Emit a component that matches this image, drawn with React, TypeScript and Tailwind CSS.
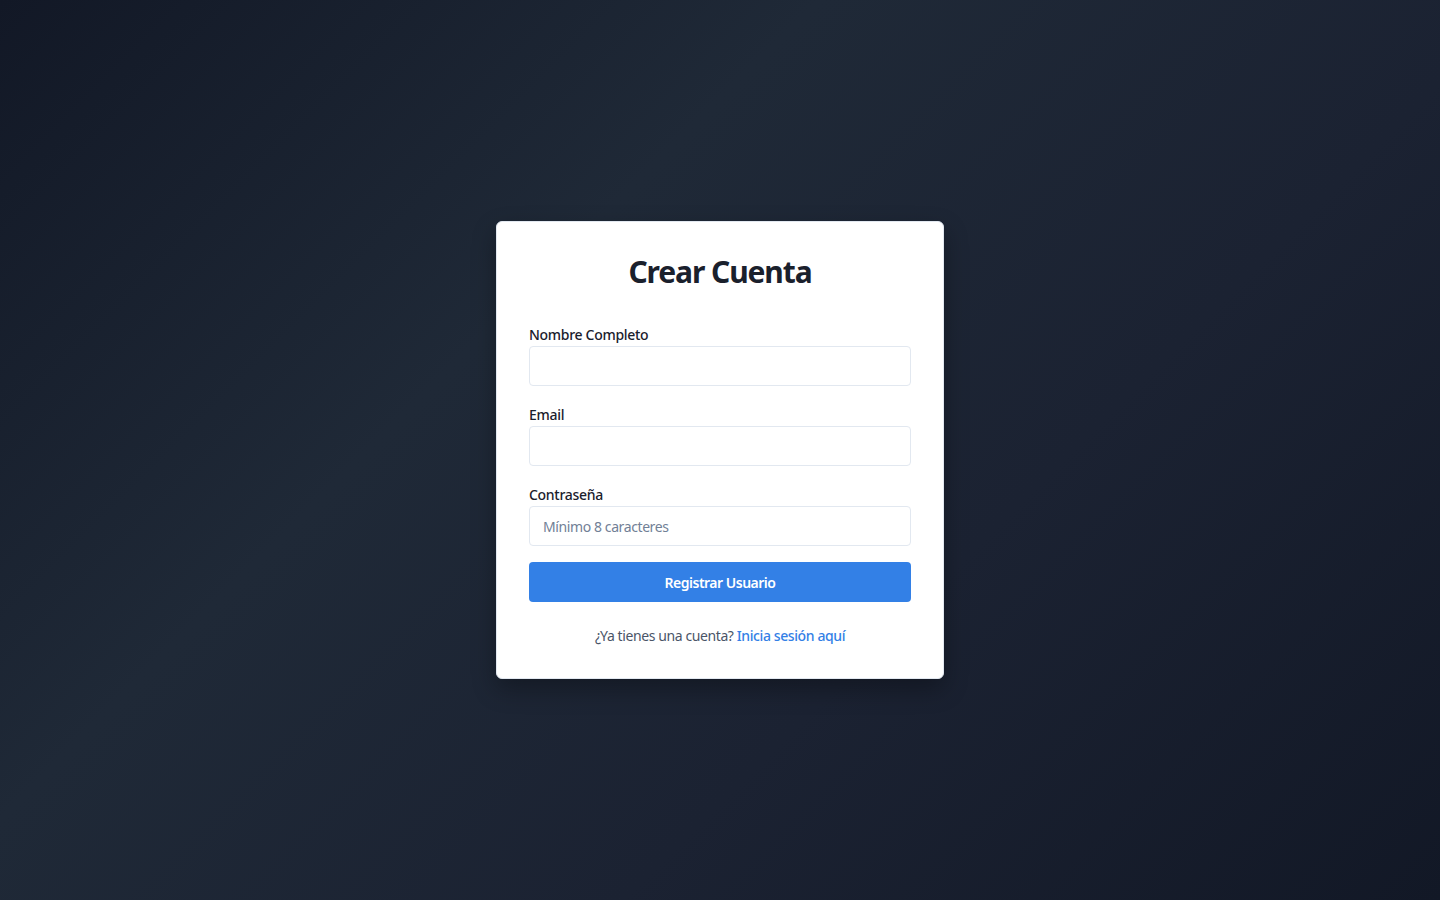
import { useState } from 'react'

// Registration card, centred on a dark diagonal gradient
export default function App() {
  const [name, setName] = useState('')
  const [email, setEmail] = useState('')
  const [password, setPassword] = useState('')

  const inputClass =
    'block w-full h-10 px-[13px] rounded-[4px] border border-[#e2e8f0] bg-white text-[14px] tracking-[-0.4px] text-[#1a202c] placeholder:text-[#718096] outline-none focus:border-[#3380e6]'

  return (
    <div className="min-h-screen w-full flex items-center justify-center bg-[linear-gradient(135deg,#121826_0%,#1f2937_35%,#1b2232_65%,#121826_100%)] font-['Noto_Sans','Open_Sans',sans-serif]">
      <div className="w-[448px] bg-white rounded-md border border-[#e2e8f0] p-8 shadow-[0_10px_25px_rgba(0,0,0,0.3)]">
        <h2 className="text-[30px] leading-9 font-bold tracking-[-1.1px] text-center text-[#1a202c] mb-[35px]">
          Crear Cuenta
        </h2>

        <form onSubmit={(e) => e.preventDefault()}>
          {/* Nombre */}
          <div className="mb-[19px]">
            <label
              htmlFor="name"
              className="block text-[14px] leading-5 font-medium tracking-[-0.3px] text-[#1a202c] mb-px"
            >
              Nombre Completo
            </label>
            <input id="name" type="text" value={name} onChange={(e) => setName(e.target.value)} className={inputClass} />
          </div>

          {/* Email */}
          <div className="mb-[19px]">
            <label
              htmlFor="email"
              className="block text-[14px] leading-5 font-medium tracking-[-0.3px] text-[#1a202c] mb-px"
            >
              Email
            </label>
            <input id="email" type="email" value={email} onChange={(e) => setEmail(e.target.value)} className={inputClass} />
          </div>

          {/* Password */}
          <div className="mb-4">
            <label
              htmlFor="password"
              className="block text-[14px] leading-5 font-medium tracking-[-0.3px] text-[#1a202c] mb-px"
            >
              Contraseña
            </label>
            <input
              id="password"
              type="password"
              placeholder="Mínimo 8 caracteres"
              value={password}
              onChange={(e) => setPassword(e.target.value)}
              className={inputClass}
            />
          </div>

          <button
            type="submit"
            className="w-full h-10 rounded-[4px] bg-[#3380e6] text-white text-[14px] font-semibold tracking-[-0.5px] hover:bg-[#2b6cb0]"
          >
            Registrar Usuario
          </button>
        </form>

        <p className="mt-6 text-center text-[14px] leading-5 tracking-[-0.4px] text-[#4a5568]">
          ¿Ya tienes una cuenta?{' '}
          <a href="#" className="text-[#3380e6] font-medium">
            Inicia sesión aquí
          </a>
        </p>
      </div>
    </div>
  )
}
